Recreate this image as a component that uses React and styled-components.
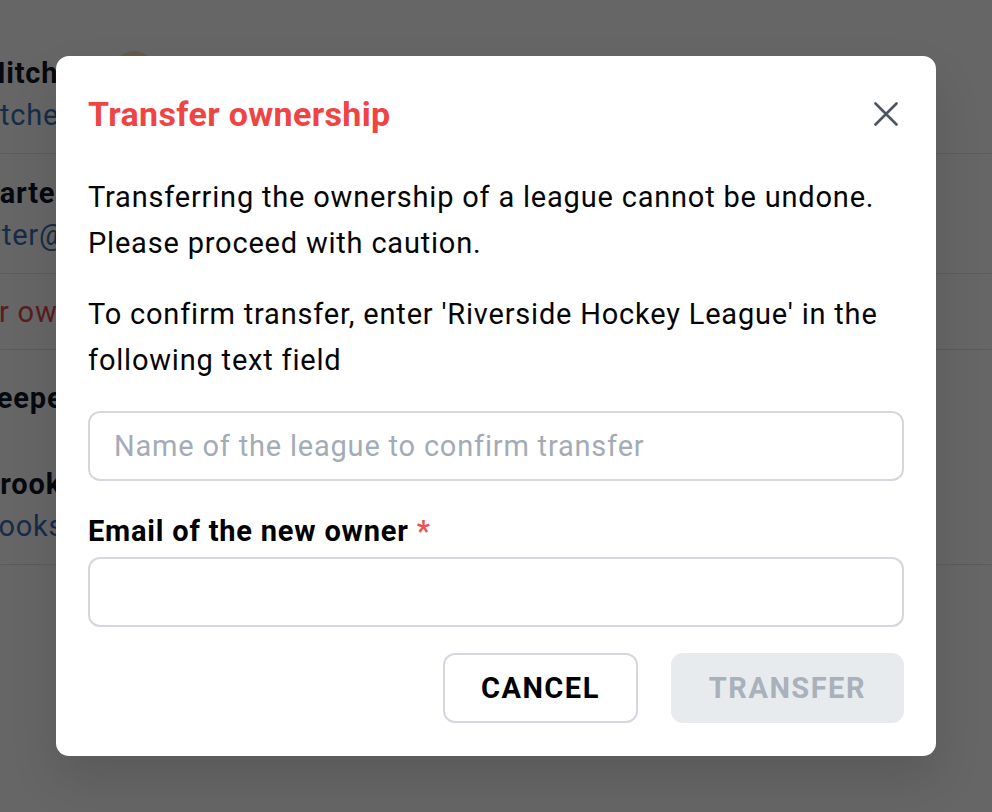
import React from "react";
import styled, { createGlobalStyle } from "styled-components";

const GlobalStyle = createGlobalStyle`
  * { box-sizing: border-box; }
  html, body { margin: 0; padding: 0; height: 100%; }
  body {
    font-family: Roboto, "Noto Sans", "Liberation Sans", sans-serif;
    background: #ffffff;
    overflow: hidden;
  }
  #root { height: 100%; }
`;

const Page = styled.div`
  position: relative;
  width: 992px;
  height: 812px;
  overflow: hidden;
  background: #ffffff;
  letter-spacing: 0.8px;
`;

const List = styled.div`
  padding-top: 34px;
  display: flex;
  flex-direction: column;
`;

const MemberRow = styled.div`
  padding: 19px 0 18px;
  border-bottom: 1px solid #e5e7eb;
  display: flex;
  flex-direction: column;
  gap: 2px;
`;

const NameLine = styled.div`
  display: flex;
  align-items: center;
  gap: 20px;
  height: 40px;
`;

const Name = styled.span`
  margin-left: ${(p) => p.$offset}px;
  font-size: 29px;
  font-weight: 700;
  color: #111827;
  white-space: nowrap;
`;

const Avatar = styled.span`
  width: 44px;
  height: 44px;
  border-radius: 50%;
  background: #f2e7a8;
  flex: none;
`;

const Email = styled.div`
  margin-left: ${(p) => p.$offset}px;
  height: 40px;
  line-height: 40px;
  font-size: 29px;
  color: #3b6fb0;
  white-space: nowrap;
`;

const ActionRow = styled.div`
  padding: 18px 0;
  border-bottom: 1px solid #e5e7eb;
  height: 76px;
`;

const DangerLink = styled.span`
  display: block;
  margin-left: -104px;
  line-height: 40px;
  font-size: 29px;
  color: #e24a4a;
  white-space: nowrap;
`;

const SectionHeading = styled.div`
  padding: 28px 0 27px;
  margin-left: -22px;
  line-height: 40px;
  font-size: 29px;
  font-weight: 700;
  color: #111827;
  white-space: nowrap;
`;

const Overlay = styled.div`
  position: absolute;
  inset: 0;
  background: rgba(0, 0, 0, 0.6);
  display: flex;
  align-items: flex-start;
  justify-content: center;
  padding-top: 56px;
`;

const Modal = styled.div`
  width: 880px;
  height: 700px;
  background: #ffffff;
  border-radius: 13px;
  padding: 32px 32px 33px;
  display: flex;
  flex-direction: column;
  box-shadow: 0 24px 48px rgba(0, 0, 0, 0.12);
`;

const Header = styled.div`
  display: flex;
  align-items: center;
  justify-content: space-between;
  height: 52px;
`;

const Title = styled.h2`
  margin: 0;
  font-size: 34px;
  line-height: 42px;
  font-weight: 700;
  letter-spacing: 0.35px;
  color: #ef4444;
`;

const CloseButton = styled.button`
  width: 36px;
  height: 36px;
  padding: 0;
  border: none;
  background: transparent;
  display: flex;
  align-items: center;
  justify-content: center;
  color: #4b5563;
  cursor: pointer;
`;

const Text = styled.p`
  margin: ${(p) => p.$top}px 0 0;
  font-size: 29px;
  line-height: 46px;
  color: #050505;
`;

const Input = styled.input`
  display: block;
  width: 100%;
  height: 70px;
  margin-top: ${(p) => p.$top}px;
  border: 2px solid #d4d8dd;
  border-radius: 12px;
  padding: 0 24px;
  font-family: inherit;
  font-size: 29px;
  letter-spacing: 0.8px;
  color: #111111;
  background: #ffffff;
  outline: none;
  &::placeholder { color: #a3acb6; }
`;

const Label = styled.label`
  display: block;
  margin-top: 27px;
  font-size: 29px;
  line-height: 46px;
  font-weight: 700;
  color: #000000;
`;

const Required = styled.span`
  color: #f05252;
`;

const Actions = styled.div`
  margin-top: 26px;
  display: flex;
  justify-content: flex-end;
  gap: 33px;
`;

const Button = styled.button`
  height: 70px;
  padding: 0 36px;
  border-radius: 12px;
  border: 2px solid ${(p) => (p.$primary ? "#e8ebee" : "#d4d8dd")};
  background: ${(p) => (p.$primary ? "#e8ebee" : "#ffffff")};
  color: ${(p) => (p.$primary ? "#a9b1ba" : "#000000")};
  font-family: inherit;
  font-size: 29px;
  font-weight: 700;
  letter-spacing: 1.5px;
  text-transform: uppercase;
  cursor: ${(p) => (p.$primary ? "not-allowed" : "pointer")};
`;

export default function App() {
  return (
    <>
      <GlobalStyle />
      <Page>
        <List>
          <MemberRow>
            <NameLine>
              <Name $offset={-20}>Mitchell</Name>
              <Avatar />
            </NameLine>
            <Email $offset={-34}>mitchell@riverside.com</Email>
          </MemberRow>
          <MemberRow>
            <NameLine>
              <Name $offset={-20}>Carter</Name>
            </NameLine>
            <Email $offset={-42}>carter@riverside.com</Email>
          </MemberRow>
          <ActionRow>
            <DangerLink>Transfer ownership</DangerLink>
          </ActionRow>
          <SectionHeading>Keepers</SectionHeading>
          <MemberRow>
            <NameLine>
              <Name $offset={-19}>Brooks</Name>
            </NameLine>
            <Email $offset={-29}>brooks@riverside.com</Email>
          </MemberRow>
        </List>
        <Overlay>
          <Modal role="dialog" aria-labelledby="transfer-title">
            <Header>
              <Title id="transfer-title">Transfer ownership</Title>
              <CloseButton aria-label="Close">
                <svg width="24" height="24" viewBox="0 0 24 24" fill="none">
                  <path
                    d="M1.5 1.5 L22.5 22.5 M22.5 1.5 L1.5 22.5"
                    stroke="currentColor"
                    strokeWidth="2.6"
                    strokeLinecap="round"
                  />
                </svg>
              </CloseButton>
            </Header>
            <Text $top={34}>
              Transferring the ownership of a league cannot be undone. Please
              proceed with caution.
            </Text>
            <Text $top={25}>
              To confirm transfer, enter 'Riverside Hockey League' in the
              following text field
            </Text>
            <Input $top={28} placeholder="Name of the league to confirm transfer" />
            <Label htmlFor="new-owner">
              Email of the new owner <Required>*</Required>
            </Label>
            <Input id="new-owner" type="email" $top={3} />
            <Actions>
              <Button>Cancel</Button>
              <Button $primary disabled>
                Transfer
              </Button>
            </Actions>
          </Modal>
        </Overlay>
      </Page>
    </>
  );
}
